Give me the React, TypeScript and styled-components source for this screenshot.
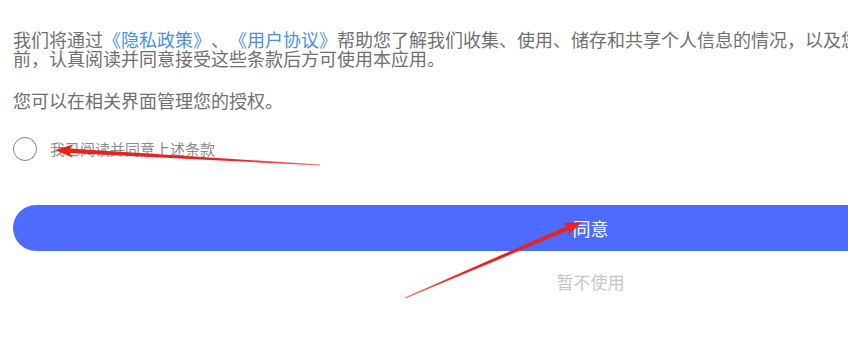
import React from 'react';
import styled, { createGlobalStyle } from 'styled-components';

const GlobalStyle = createGlobalStyle`
  html, body {
    margin: 0;
    padding: 0;
    background: #ffffff;
    overflow: hidden;
  }
  body {
    font-family: "Noto Sans CJK SC", "Noto Sans", sans-serif;
    text-spacing-trim: space-all;
  }
`;

const Page = styled.div`
  position: relative;
  width: 1181px;
  height: 347px;
  box-sizing: border-box;
  padding: 30px 13px 0;
`;

const Paragraph = styled.p<{ gap?: number }>`
  margin: ${({ gap }) => gap || 0}px 0 0;
  font-size: 18px;
  line-height: 19px;
  color: #707070;
  text-spacing-trim: space-all;
`;

const Link = styled.span`
  color: #4a8fe2;
`;

const AgreeRow = styled.label`
  display: flex;
  align-items: center;
  gap: 13px;
  margin-top: 27px;
  cursor: pointer;
`;

const Radio = styled.span<{ checked: boolean }>`
  width: 22px;
  height: 22px;
  border-radius: 50%;
  border: 1px solid #808080;
  background: ${({ checked }) => (checked ? '#4d6bfe' : '#ffffff')};
  flex-shrink: 0;
`;

const AgreeText = styled.span`
  font-size: 15px;
  line-height: 24px;
  color: #8c8c8c;
`;

const PrimaryButton = styled.button`
  display: block;
  width: 100%;
  height: 46px;
  margin-top: 44px;
  border: none;
  border-radius: 23px;
  background: #4d6bfe;
  color: #ffffff;
  font-family: inherit;
  font-size: 18px;
  outline: none;
`;

const SecondaryButton = styled.button`
  display: block;
  margin: 19px auto 0;
  border: none;
  background: none;
  color: #c6c6c6;
  font-family: inherit;
  font-size: 17px;
  line-height: 22px;
  outline: none;
`;

const Annotations = styled.svg`
  position: absolute;
  left: 0;
  top: 0;
  width: 848px;
  height: 347px;
  pointer-events: none;
`;

type Pt = [number, number];

// tapered red arrow, thin at the tail, thick at the head
function arrowPoints(tail: Pt, tip: Pt, headLen: number, headW: number, shaftW: number) {
  const dx = tip[0] - tail[0];
  const dy = tip[1] - tail[1];
  const len = Math.hypot(dx, dy);
  const ux = dx / len;
  const uy = dy / len;
  const nx = -uy;
  const ny = ux;
  const bx = tip[0] - ux * headLen;
  const by = tip[1] - uy * headLen;
  const wx = bx - ux * 3;
  const wy = by - uy * 3;
  const pts: Pt[] = [
    [tail[0] + nx * 0.4, tail[1] + ny * 0.4],
    [bx + (nx * shaftW) / 2, by + (ny * shaftW) / 2],
    [wx + (nx * headW) / 2, wy + (ny * headW) / 2],
    tip,
    [wx - (nx * headW) / 2, wy - (ny * headW) / 2],
    [bx - (nx * shaftW) / 2, by - (ny * shaftW) / 2],
    [tail[0] - nx * 0.4, tail[1] - ny * 0.4],
  ];
  return pts.map((p) => p.map((v) => v.toFixed(1)).join(',')).join(' ');
}

const arrows: { tail: Pt; tip: Pt }[] = [
  { tail: [320, 165], tip: [55, 150] },
  { tail: [405, 298], tip: [582, 222] },
];

const App = () => {
  const [checked, setChecked] = React.useState(false);

  return (
    <>
      <GlobalStyle />
      <Page>
        <Paragraph>
          我们将通过<Link>《隐私政策》</Link>、<Link>《用户协议》</Link>帮助您了解我们收集、使用、储存和共享个人信息的情况，以及您享有的相关权利。请您在使用本应用之前，认真阅读并同意接受这些条款后方可使用本应用。
        </Paragraph>
        <Paragraph gap={23}>您可以在相关界面管理您的授权。</Paragraph>

        <AgreeRow onClick={() => setChecked(!checked)}>
          <Radio checked={checked} />
          <AgreeText>我已阅读并同意上述条款</AgreeText>
        </AgreeRow>

        <PrimaryButton>同意</PrimaryButton>
        <SecondaryButton>暂不使用</SecondaryButton>

        <Annotations viewBox="0 0 848 347">
          <defs>
            <linearGradient id="fade1" x1="320" y1="165" x2="55" y2="150" gradientUnits="userSpaceOnUse">
              <stop offset="0" stopColor="#f06a66" />
              <stop offset="0.35" stopColor="#e8231f" />
              <stop offset="1" stopColor="#e8231f" />
            </linearGradient>
            <linearGradient id="fade2" x1="405" y1="298" x2="582" y2="222" gradientUnits="userSpaceOnUse">
              <stop offset="0" stopColor="#f06a66" />
              <stop offset="0.35" stopColor="#e8231f" />
              <stop offset="1" stopColor="#e8231f" />
            </linearGradient>
          </defs>
          {arrows.map((a, i) => (
            <polygon key={i} points={arrowPoints(a.tail, a.tip, 15, 13, 4.5)} fill={`url(#fade${i + 1})`} />
          ))}
        </Annotations>
      </Page>
    </>
  );
};

export default App;
